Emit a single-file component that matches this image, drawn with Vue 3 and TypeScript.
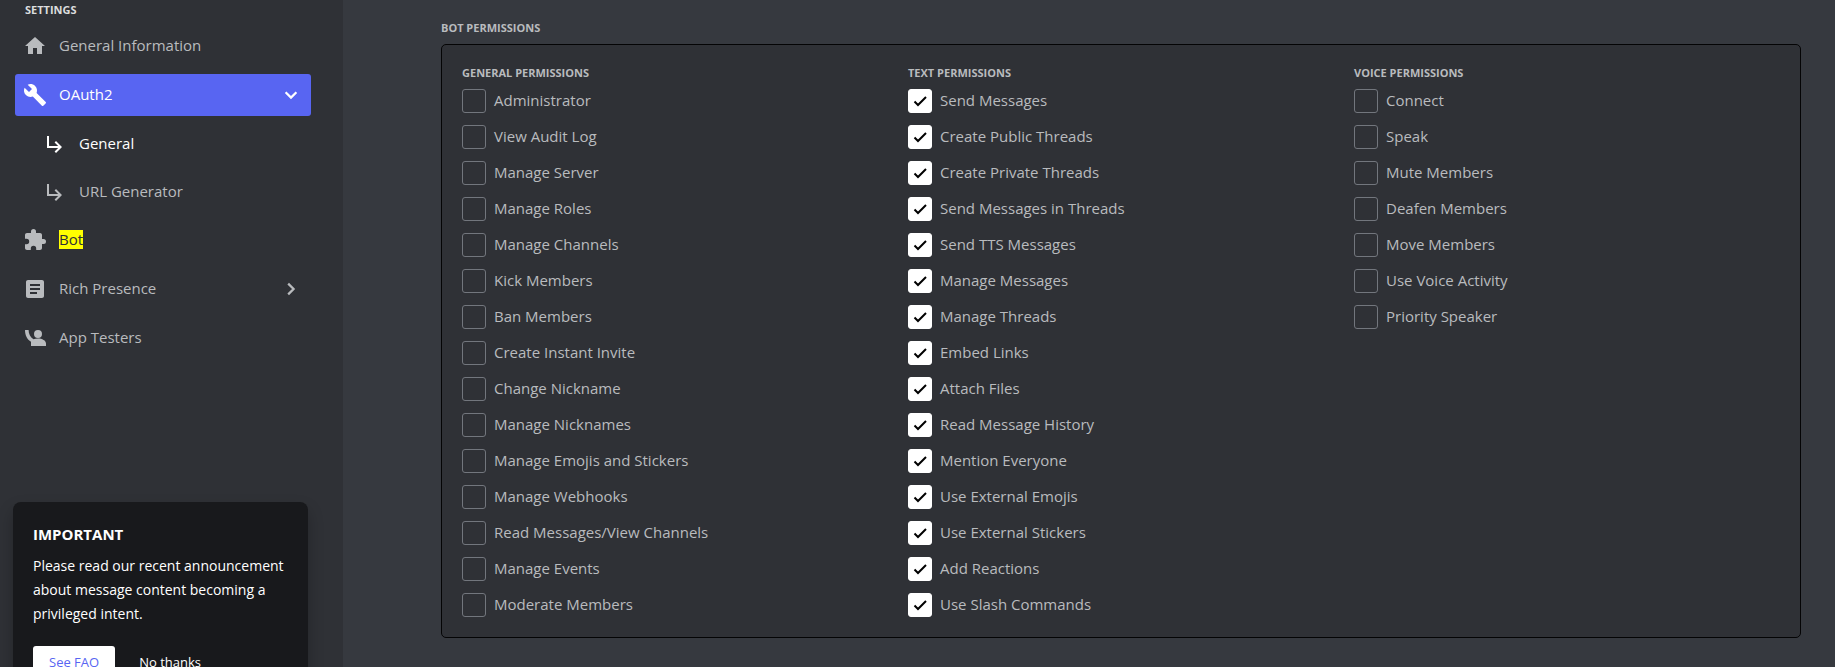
<script setup lang="ts">
import { reactive } from 'vue'

interface NavItem {
  label: string
  icon: string
  active?: boolean
  sub?: boolean
  current?: boolean
  marked?: boolean
  chevron?: 'down' | 'right'
}

interface Group {
  title: string
  items: string[]
}

const icons: Record<string, string> = {
  home: 'M10 20v-6h4v6h5v-8h3L12 3 2 12h3v8z',
  wrench: 'M22.7 19l-9.1-9.1c.9-2.3.4-5-1.5-6.9-2-2-5-2.4-7.4-1.3L9 6 6 9 1.6 4.7C.4 7.1.9 10.1 2.9 12.1c1.9 1.9 4.6 2.4 6.9 1.5l9.1 9.1c.4.4 1 .4 1.4 0l2.3-2.3c.5-.4.5-1.1.1-1.4z',
  branch: 'M19 15l-6 6-1.42-1.42L15.17 16H4V4h2v10h9.17l-3.59-3.58L13 9l6 6z',
  puzzle: 'M20.5 11H19V7c0-1.1-.9-2-2-2h-4V3.5a2.5 2.5 0 0 0-5 0V5H4c-1.1 0-2 .9-2 2v3.8h1.5a2.7 2.7 0 0 1 0 5.4H2V20c0 1.1.9 2 2 2h3.8v-1.5a2.7 2.7 0 0 1 5.4 0V22H17c1.1 0 2-.9 2-2v-4h1.5a2.5 2.5 0 0 0 0-5z',
  article: 'M19 3H5c-1.1 0-2 .9-2 2v14c0 1.1.9 2 2 2h14c1.1 0 2-.9 2-2V5c0-1.1-.9-2-2-2zm-5 14H7v-2h7v2zm3-4H7v-2h10v2zm0-4H7V7h10v2z',
  tester: 'M15 4a4 4 0 1 1 0 8 4 4 0 0 1 0-8zM2 4h3.6c0 4 1.6 7.2 4.9 9.2 1.3-.4 2.8-.6 4.5-.6 4.2 0 8 2 8 5V20H8v-4.2C4.2 13.5 2 9.5 2 4z',
}

const nav: NavItem[] = [
  { label: 'General Information', icon: 'home' },
  { label: 'OAuth2', icon: 'wrench', active: true, chevron: 'down' },
  { label: 'General', icon: 'branch', sub: true, current: true },
  { label: 'URL Generator', icon: 'branch', sub: true },
  { label: 'Bot', icon: 'puzzle', marked: true },
  { label: 'Rich Presence', icon: 'article', chevron: 'right' },
  { label: 'App Testers', icon: 'tester' },
]

const groups: Group[] = [
  {
    title: 'General Permissions',
    items: [
      'Administrator', 'View Audit Log', 'Manage Server', 'Manage Roles', 'Manage Channels',
      'Kick Members', 'Ban Members', 'Create Instant Invite', 'Change Nickname', 'Manage Nicknames',
      'Manage Emojis and Stickers', 'Manage Webhooks', 'Read Messages/View Channels',
      'Manage Events', 'Moderate Members',
    ],
  },
  {
    title: 'Text Permissions',
    items: [
      'Send Messages', 'Create Public Threads', 'Create Private Threads', 'Send Messages in Threads',
      'Send TTS Messages', 'Manage Messages', 'Manage Threads', 'Embed Links', 'Attach Files',
      'Read Message History', 'Mention Everyone', 'Use External Emojis', 'Use External Stickers',
      'Add Reactions', 'Use Slash Commands',
    ],
  },
  {
    title: 'Voice Permissions',
    items: [
      'Connect', 'Speak', 'Mute Members', 'Deafen Members', 'Move Members',
      'Use Voice Activity', 'Priority Speaker',
    ],
  },
]

const granted = reactive<Record<string, boolean>>(
  Object.fromEntries(groups[1].items.map((name) => [name, true])),
)
</script>

<template>
  <div class="page">
    <aside class="sidebar">
      <h2 class="heading">Settings</h2>
      <nav class="nav">
        <a
          v-for="item in nav"
          :key="item.label"
          href="#"
          class="item"
          :class="{ active: item.active, sub: item.sub, current: item.current }"
        >
          <svg class="icon" viewBox="0 0 24 24" aria-hidden="true"><path :d="icons[item.icon]" /></svg>
          <mark v-if="item.marked">{{ item.label }}</mark>
          <span v-else>{{ item.label }}</span>
          <svg v-if="item.chevron" class="chevron" :class="item.chevron" viewBox="0 0 16 16" aria-hidden="true">
            <path d="M5.5 3.200l4.800 4.800-4.800 4.800" />
          </svg>
        </a>
      </nav>
      <section class="notice">
        <h3>IMPORTANT</h3>
        <p>Please read our recent announcement about message content becoming a privileged intent.</p>
        <div class="actions">
          <button type="button" class="primary">See FAQ</button>
          <button type="button">No thanks</button>
        </div>
      </section>
    </aside>

    <main class="main">
      <h2 class="heading">Bot Permissions</h2>
      <div class="panel">
        <section v-for="group in groups" :key="group.title" class="group">
          <h3 class="heading">{{ group.title }}</h3>
          <label v-for="name in group.items" :key="name" class="permission">
            <span class="box">
              <input v-model="granted[name]" type="checkbox" />
              <svg v-if="granted[name]" viewBox="0 0 24 24" aria-hidden="true">
                <path d="M6.5 12.500l3.500 3.500 8-8" />
              </svg>
            </span>
            {{ name }}
          </label>
        </section>
      </div>
    </main>
  </div>
</template>

<style>
body {
  background: #36393f;
}
</style>

<style scoped>
.page {
  display: flex;
  height: 100vh;
  overflow: hidden;
  color: #b9bbbe;
  font-family: "Open Sans", "Noto Sans", sans-serif;
  font-size: 15px;
  line-height: 22px;
}

.heading {
  margin: 0;
  font-size: 11px;
  line-height: 16px;
  font-weight: 700;
  text-transform: uppercase;
}

.sidebar {
  box-sizing: border-box;
  flex: none;
  width: 343px;
  padding: 2px 32px 0 15px;
  background: #2f3136;
}

.sidebar > .heading {
  margin: 0 10px 7px;
  color: #dcddde;
}

.nav {
  display: flex;
  flex-direction: column;
  gap: 7px;
}

.item {
  display: flex;
  align-items: center;
  height: 42px;
  padding: 0 11px 0 8px;
  border-radius: 3px;
  color: #b9bbbe;
  text-decoration: none;
}

.item.sub {
  height: 41px;
  padding-left: 28px;
}

.item.active {
  background: #5865f2;
  color: #fff;
}

.item.current {
  color: #fff;
}

.icon {
  width: 24px;
  height: 24px;
  margin-right: 12px;
  fill: currentColor;
}

.item span,
.item mark {
  margin-bottom: 2px;
}

mark {
  background: #ff0;
  color: #2f3136;
  line-height: 19px;
}

.chevron {
  width: 18px;
  height: 18px;
  margin-left: auto;
  fill: none;
  stroke: currentColor;
  stroke-width: 2;
}

.chevron.down {
  transform: rotate(90deg);
}

.notice {
  margin: 143px 3px 0 -2px;
  padding: 20px;
  border-radius: 8px;
  background: #18191c;
  box-shadow: 0 8px 16px rgba(0, 0, 0, 0.24);
  color: #fff;
  font-size: 14px;
  line-height: 24px;
}

.notice h3 {
  margin: 0 0 8px;
  font-size: 15px;
}

.notice p {
  margin: 0 0 20px;
}

.actions {
  display: flex;
  gap: 8px;
}

.actions button {
  height: 32px;
  padding: 0 16px;
  border: 0;
  border-radius: 3px;
  background: transparent;
  color: #fff;
  font: 500 13px "Open Sans", "Noto Sans", sans-serif;
}

.actions .primary {
  background: #fff;
  color: #5865f2;
}

.main {
  flex: 1;
  padding: 20px 34px 0 98px;
}

.main > .heading {
  margin-bottom: 8px;
}

.panel {
  display: grid;
  grid-template-columns: repeat(3, 1fr);
  padding: 20px 0 20px 20px;
  border: 1px solid #040405;
  border-radius: 5px;
  background: #2f3136;
}

.group {
  display: flex;
  flex-direction: column;
  gap: 12px;
}

.group .heading {
  margin-bottom: -4px;
}

.permission {
  display: flex;
  align-items: flex-start;
  gap: 8px;
}

.box {
  display: grid;
  width: 24px;
  height: 24px;
}

.box > * {
  grid-area: 1 / 1;
}

.box input {
  appearance: none;
  box-sizing: border-box;
  width: 24px;
  height: 24px;
  margin: 0;
  border: 1px solid #72767d;
  border-radius: 3px;
}

.box input:checked {
  border-color: #fff;
  background: #fff;
}

.box svg {
  pointer-events: none;
  fill: none;
  stroke: #000;
  stroke-width: 2;
}
</style>
